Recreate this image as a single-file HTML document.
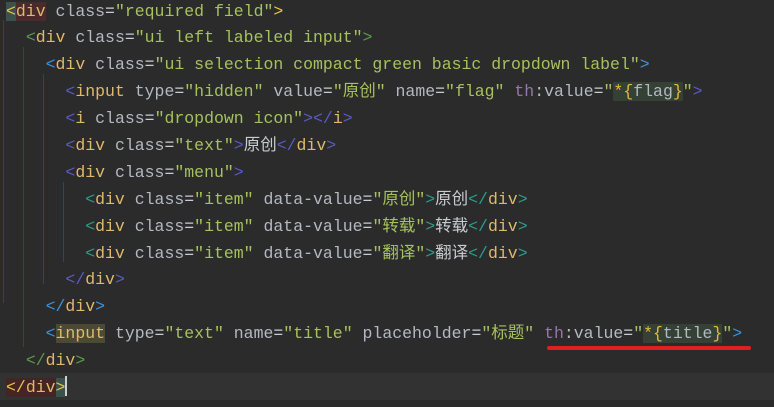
<!DOCTYPE html>
<html><head><meta charset="utf-8"><style>
html,body{margin:0;padding:0;background:#2b2b2b;width:774px;height:407px;overflow:hidden}
.code{position:absolute;left:6px;top:-1.5px;font-family:"Liberation Mono","Noto Sans CJK SC",monospace;font-size:16.5px;line-height:26.9px;color:#a9b7c6}
.l{height:26.9px;white-space:pre}
.t{color:#e0b96a}.a{color:#b3b9c2}.v{color:#a5c25c}.p{color:#9876aa}.o{color:#e8b93a}.c{color:#c9ccd0}
.b0{color:#e8c83a}.b1{color:#5c9a4c}.b2{color:#3d92dc}.b3{color:#5a5ac8}.b4{color:#2a9c8c}
.cur{position:absolute;left:0;top:373px;width:774px;height:27px;background:#323232}
.g{position:absolute;width:1px}
.hl{background:#344134}
</style></head><body>
<div class="cur"></div>
<div class="g" style="left:3px;top:20px;height:283px;background:#4a3f1e"></div>
<div class="g" style="left:23px;top:47px;height:300px;background:#2f4a2f"></div>
<div class="g" style="left:43px;top:74px;height:210px;background:#2d4563"></div>
<div class="g" style="left:63px;top:182px;height:80px;background:#2f4560"></div>
<div class="code"><div class="l"><span class="b0" style="background:#3b514d">&lt;</span><span class="t" style="background:#4a2a2a">div</span> <span class="a">class</span><span class="c">=</span><span class="v">"required field"</span><span class="b0">&gt;</span></div><div class="l">  <span class="b1">&lt;</span><span class="t">div</span> <span class="a">class</span><span class="c">=</span><span class="v">"ui left labeled input"</span><span class="b1">&gt;</span></div><div class="l">    <span class="b2">&lt;</span><span class="t">div</span> <span class="a">class</span><span class="c">=</span><span class="v">"ui selection compact green basic dropdown label"</span><span class="b2">&gt;</span></div><div class="l">      <span class="b3">&lt;</span><span class="t">input</span> <span class="a">type</span><span class="c">=</span><span class="v">"hidden"</span> <span class="a">value</span><span class="c">=</span><span class="v">"原创"</span> <span class="a">name</span><span class="c">=</span><span class="v">"flag"</span> <span class="p">th</span><span class="a">:value</span><span class="c">=</span><span class="v">"</span><span class="hl"><span class="o">*{</span><span class="a">flag</span><span class="o">}</span></span><span class="v">"</span><span class="b3">&gt;</span></div><div class="l">      <span class="b3">&lt;</span><span class="t">i</span> <span class="a">class</span><span class="c">=</span><span class="v">"dropdown icon"</span><span class="b3">&gt;&lt;/</span><span class="t">i</span><span class="b3">&gt;</span></div><div class="l">      <span class="b3">&lt;</span><span class="t">div</span> <span class="a">class</span><span class="c">=</span><span class="v">"text"</span><span class="b3">&gt;</span><span class="c">原创</span><span class="b3">&lt;/</span><span class="t">div</span><span class="b3">&gt;</span></div><div class="l">      <span class="b3">&lt;</span><span class="t">div</span> <span class="a">class</span><span class="c">=</span><span class="v">"menu"</span><span class="b3">&gt;</span></div><div class="l">        <span class="b4">&lt;</span><span class="t">div</span> <span class="a">class</span><span class="c">=</span><span class="v">"item"</span> <span class="a">data-value</span><span class="c">=</span><span class="v">"原创"</span><span class="b4">&gt;</span><span class="c">原创</span><span class="b4">&lt;/</span><span class="t">div</span><span class="b4">&gt;</span></div><div class="l">        <span class="b4">&lt;</span><span class="t">div</span> <span class="a">class</span><span class="c">=</span><span class="v">"item"</span> <span class="a">data-value</span><span class="c">=</span><span class="v">"转载"</span><span class="b4">&gt;</span><span class="c">转载</span><span class="b4">&lt;/</span><span class="t">div</span><span class="b4">&gt;</span></div><div class="l">        <span class="b4">&lt;</span><span class="t">div</span> <span class="a">class</span><span class="c">=</span><span class="v">"item"</span> <span class="a">data-value</span><span class="c">=</span><span class="v">"翻译"</span><span class="b4">&gt;</span><span class="c">翻译</span><span class="b4">&lt;/</span><span class="t">div</span><span class="b4">&gt;</span></div><div class="l">      <span class="b3">&lt;/</span><span class="t">div</span><span class="b3">&gt;</span></div><div class="l">    <span class="b2">&lt;/</span><span class="t">div</span><span class="b2">&gt;</span></div><div class="l">    <span class="b2">&lt;</span><span class="t" style="background:#4b4a35">input</span> <span class="a">type</span><span class="c">=</span><span class="v">"text"</span> <span class="a">name</span><span class="c">=</span><span class="v">"title"</span> <span class="a">placeholder</span><span class="c">=</span><span class="v">"标题"</span> <span class="p">th</span><span class="a">:value</span><span class="c">=</span><span class="v">"</span><span class="hl"><span class="o">*{</span><span class="a">title</span><span class="o">}</span></span><span class="v">"</span><span class="b2">&gt;</span></div><div class="l">  <span class="b1">&lt;/</span><span class="t">div</span><span class="b1">&gt;</span></div><div class="l"><span style="background:#452424"><span class="b0">&lt;/</span><span class="t">div</span></span><span class="b0" style="background:#3a524e">&gt;</span><span style="display:inline-block;width:2px;height:20px;background:#cfcfcf;vertical-align:-4px"></span></div></div>
<div style="position:absolute;left:547px;top:346px;width:204px;height:4px;border-radius:2px;background:#e0201f"></div>
</body></html>
